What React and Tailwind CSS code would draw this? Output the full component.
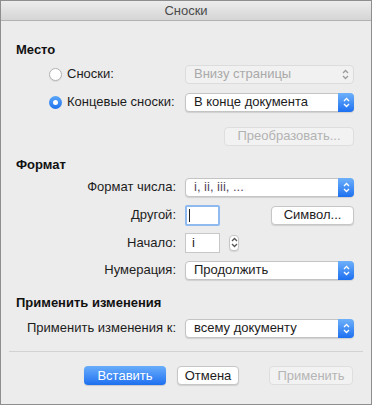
import React from "react";

const Arrows = ({ color = "white" }) => (
  <svg width="7" height="11" viewBox="0 0 7 11" fill="none">
    <path d="M1 4 L3.5 1.5 L6 4" stroke={color} strokeWidth="1.3" />
    <path d="M1 7 L3.5 9.5 L6 7" stroke={color} strokeWidth="1.3" />
  </svg>
);

const Popup = ({ value, disabled, textClass = "" }) => {
  if (disabled) {
    return (
      <div className="w-[169px] h-[19px] flex items-center rounded-[4px] border border-[#dcdcdc] bg-[#f1f1f1]">
        <span className="flex-1 pl-[8px] text-[13px] text-[#a9a9a9]">{value}</span>
        <div className="w-[16px] flex justify-center">
          <Arrows color="#9a9a9a" />
        </div>
      </div>
    );
  }
  return (
    <div className="w-[169px] h-[19px] flex items-stretch rounded-[4px] border border-[#c4c4c4] bg-white shadow-[0_1px_1px_rgba(0,0,0,0.12)]">
      <span className={`flex-1 flex items-center pl-[8px] text-[13px] ${textClass || "text-[#1c1c1c]"}`}>{value}</span>
      <div className="w-[16px] -m-px flex items-center justify-center rounded-r-[4px] bg-gradient-to-b from-[#6db0fa] to-[#1b6ff0]">
        <Arrows />
      </div>
    </div>
  );
};

const Row = ({ label, children, h = "h-[28px]" }) => (
  <div className={`flex items-center ${h}`}>
    <div className="w-[184px] pr-[9px] text-right text-[13px] text-[#1c1c1c]">{label}</div>
    {children}
  </div>
);

const Radio = ({ checked }) =>
  checked ? (
    <div className="w-[13px] h-[13px] rounded-full bg-gradient-to-b from-[#5aa6fa] to-[#1f70ee] flex items-center justify-center">
      <div className="w-[5px] h-[5px] rounded-full bg-white" />
    </div>
  ) : (
    <div className="w-[13px] h-[13px] rounded-full border border-[#b3b3b3] bg-white shadow-[0_1px_1px_rgba(0,0,0,0.08)]" />
  );

export default function App() {
  return (
    <div
      className="w-[372px] h-[405px] bg-[#ececec] border border-[#8e8e8e] flex flex-col overflow-hidden"
      style={{ fontFamily: '"Liberation Sans", Arial, sans-serif' }}
    >
      {/* заголовок окна */}
      <div className="h-[20px] shrink-0 flex items-center justify-center bg-gradient-to-b from-[#ececec] to-[#d5d5d5] border-b border-[#b2b2b2] text-[13px] text-[#4a4a4a]">
        Сноски
      </div>

      {/* Место */}
      <div className="mt-[21px] h-[16px] pl-[15px] flex items-center text-[13px] font-bold text-[#111]">Место</div>

      <div className="mt-[2px] h-[28px] flex items-center">
        <div className="w-[184px] pl-[48px] flex items-center">
          <Radio />
          <span className="ml-[5px] text-[13px] text-[#1c1c1c]">Сноски:</span>
        </div>
        <Popup value="Внизу страницы" disabled />
      </div>
      <div className="h-[28px] flex items-center">
        <div className="w-[184px] pl-[48px] flex items-center">
          <Radio checked />
          <span className="ml-[5px] text-[13px] text-[#1c1c1c]">Концевые сноски:</span>
        </div>
        <Popup value="В конце документа" />
      </div>

      <div className="mt-[6px] h-[28px] flex items-center justify-end pr-[17px]">
        <div className="w-[130px] h-[19px] flex items-center justify-center rounded-[4px] border border-[#dedede] bg-[#f2f2f2] text-[13px] text-[#b3b3b3]">
          Преобразовать...
        </div>
      </div>

      {/* Формат */}
      <div className="mt-[7px] h-[16px] pl-[15px] flex items-center text-[13px] font-bold text-[#111]">Формат</div>

      <Row label="Формат числа:">
        <Popup value="i, ii, iii, ..." textClass="text-[#5a4664]" />
      </Row>
      <Row label="Другой:">
        <div className="w-[35px] h-[21px] border-2 border-[#8fbaf0] bg-white rounded-[2px] flex items-center pl-[2px]">
          <div className="w-px h-[13px] bg-[#222]" />
        </div>
        <div className="ml-[51px] w-[83px] h-[19px] flex items-center justify-center rounded-[4px] border border-[#c6c6c6] bg-white shadow-[0_1px_1px_rgba(0,0,0,0.12)] text-[13px] text-[#1c1c1c]">
          Символ...
        </div>
      </Row>
      <Row label="Начало:" h="h-[27px]">
        <div className="w-[35px] h-[20px] border border-[#c8c8c8] bg-white flex items-center pl-[6px] text-[13px] text-[#1c1c1c]">
          i
        </div>
        <div className="ml-[9px] w-[10px] h-[16px] rounded-[4px] border border-[#c6c6c6] bg-white flex items-center justify-center shadow-[0_1px_1px_rgba(0,0,0,0.1)]">
          <Arrows color="#555" />
        </div>
      </Row>
      <Row label="Нумерация:">
        <Popup value="Продолжить" />
      </Row>

      {/* Применить изменения */}
      <div className="mt-[11px] h-[16px] pl-[15px] flex items-center text-[13px] font-bold text-[#111]">Применить изменения</div>
      <div className="mt-[3px]">
        <Row label="Применить изменения к:">
          <Popup value="всему документу" />
        </Row>
      </div>

      <div className="mt-[9px] mx-[8px] h-px bg-[#d2d2d2]" />

      <div className="mt-[14px] flex items-center pl-[83px]">
        <div className="w-[82px] h-[19px] flex items-center justify-center rounded-[4px] bg-gradient-to-b from-[#69adfa] to-[#1c6ff0] text-[13px] text-white shadow-[0_1px_1px_rgba(0,0,0,0.15)]">
          Вставить
        </div>
        <div className="ml-[11px] w-[62px] h-[19px] flex items-center justify-center rounded-[4px] border border-[#c6c6c6] bg-white text-[13px] text-[#1c1c1c] shadow-[0_1px_1px_rgba(0,0,0,0.12)]">
          Отмена
        </div>
        <div className="ml-[30px] w-[84px] h-[19px] flex items-center justify-center rounded-[4px] border border-[#dedede] bg-[#f2f2f2] text-[13px] text-[#b5b5b5]">
          Применить
        </div>
      </div>
    </div>
  );
}
